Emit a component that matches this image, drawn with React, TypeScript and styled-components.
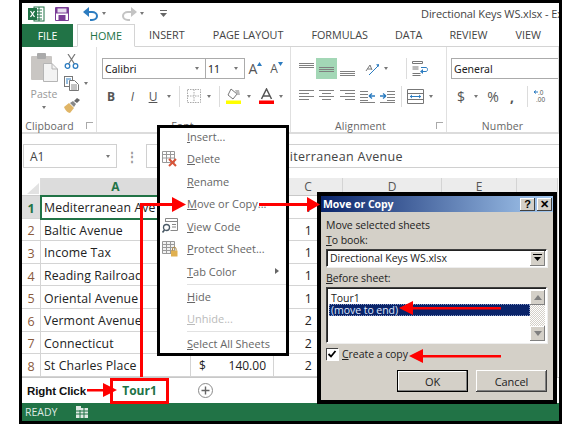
import React from "react";
import styled, { createGlobalStyle } from "styled-components";

const Global = createGlobalStyle`
  html, body { margin: 0; padding: 0; background: #fff; }
  * { box-sizing: border-box; }
`;
const UI = `"Open Sans", "Noto Sans", sans-serif`;
const GREEN = "#217346";

const Page = styled.div`
  position: relative; width: 580px; height: 426px; overflow: hidden;
  padding-left: 19px; font-family: ${UI}; background: #fff;
`;
const Frame = styled.div`
  width: 543px; height: 424px; border: 3px solid #000; background: #fff;
  display: flex; flex-direction: column; overflow: hidden;
`;
const TitleBar = styled.div`
  height: 21px; display: flex; align-items: center; padding-left: 5px; flex: none;
`;
const Qat = styled.div<{ $w: number }>`
  width: ${(p) => p.$w}px; height: 21px; flex: none;
  display: flex; align-items: center; justify-content: center;
`;
const DocTitle = styled.div`
  margin-left: auto; font-size: 11px; color: #444; white-space: nowrap;
  width: 138px; letter-spacing: -0.1px; padding-top: 0;
`;
const Tabs = styled.div`
  height: 23px; display: flex; flex: none; position: relative;
  border-bottom: 1px solid #d4d4d4; font-size: 10.8px; color: #444;
`;
const FileTab = styled.div`
  width: 51px; height: 23px; background: ${GREEN}; color: #fff; font-weight: 400;
  display: flex; align-items: center; justify-content: center; font-size: 10.5px;
`;
const HomeTab = styled.div`
  width: 58px; height: 23px; margin-left: 4px; border: 1px solid #d4d4d4; border-bottom: 1px solid #fff;
  color: ${GREEN}; background: #fff; display: flex; align-items: center; justify-content: center;
`;
const Tab = styled.div<{ $ml: number }>`
  margin-left: ${(p) => p.$ml}px; line-height: 22px; white-space: nowrap;
`;
const Ribbon = styled.div`
  height: 87px; display: flex; flex: none; border-bottom: 2px solid #dcdcdc;
`;
const Group = styled.div<{ $w?: number }>`
  ${(p) => (p.$w ? `width: ${p.$w}px; flex: none;` : "flex: 1; min-width: 0;")}
  display: flex; flex-direction: column; position: relative;
  border-right: 1px solid #e0e0e0;
`;
const GroupBody = styled.div<{ $pl?: number }>`
  flex: 1; padding: 11px 0 0 ${(p) => p.$pl ?? 0}px; display: flex; flex-direction: column; gap: 7px; min-height: 0; overflow: hidden;
`;
const GroupLabel = styled.div<{ $pr?: number }>`
  height: 12px; font-size: 10.5px; color: #666; text-align: center; line-height: 12px; flex: none;
  position: relative; letter-spacing: 0.1px; padding-right: ${(p) => p.$pr ?? 0}px;
`;
const Launcher = styled.span`
  position: absolute; right: 3px; top: 2px; width: 7px; height: 7px;
  border-left: 1px solid #aaa; border-top: 1px solid #aaa;
`;
const ToolRow = styled.div<{ $ml?: number; $h?: number }>`
  display: flex; align-items: center; height: ${(p) => p.$h ?? 20}px; margin-left: ${(p) => p.$ml ?? 0}px; flex: none;
`;
const Tool = styled.div<{ $w: number; $on?: boolean; $c?: string; $fs?: number; $b?: boolean; $i?: boolean; $u?: boolean }>`
  width: ${(p) => p.$w}px; height: 100%; flex: none; display: flex; align-items: center; justify-content: center;
  background: ${(p) => (p.$on ? "#a3d7b6" : "transparent")};
  color: ${(p) => p.$c ?? "#555"}; font-size: ${(p) => p.$fs ?? 12}px;
  font-weight: ${(p) => (p.$b ? 700 : 400)}; font-style: ${(p) => (p.$i ? "italic" : "normal")};
  text-decoration: ${(p) => (p.$u ? "underline" : "none")};
`;
const Caret = styled.span`
  width: 0; height: 0; border-left: 2.5px solid transparent; border-right: 2.5px solid transparent;
  border-top: 3px solid #777;
`;
const VSep = styled.div<{ $ml: number; $mr: number }>`
  width: 1px; height: 21px; background: #dcdcdc; margin: 0 ${(p) => p.$mr}px 0 ${(p) => p.$ml}px; flex: none;
`;
const Select = styled.div<{ $w: number; $ml?: number }>`
  width: ${(p) => p.$w}px; margin-left: ${(p) => p.$ml ?? 0}px; height: 21px; flex: none; border: 1px solid #ababab; background: #fff;
  display: flex; align-items: center; justify-content: space-between; padding: 0 6px 0 2px;
  font-size: 10.5px; color: #222; font-family: "Noto Sans", sans-serif;
`;
const ClipBody = styled.div`
  flex: 1; display: flex; min-height: 0;
`;
const PasteCol = styled.div`
  width: 40px; display: flex; flex-direction: column; align-items: center; padding: 6px 0 0 0; margin-left: 2px;
  font-size: 10.5px; color: #999; line-height: 14px;
`;
const PasteLabel = styled.div`
  margin-top: 5px; margin-bottom: 5px;
`;
const ClipTools = styled.div`
  display: flex; flex-direction: column; padding-top: 7px; gap: 7px; align-items: flex-start;
`;
const ClipTool = styled.div`
  display: flex; align-items: center; gap: 5px; height: 15px;
`;

const FormulaWrap = styled.div`
  height: 44px; flex: none; padding: 10px 0 10px 1px; display: flex; align-items: stretch;
`;
const NameBox = styled.div`
  width: 94px; border: 1px solid #d0d0d0; display: flex; align-items: center; justify-content: space-between;
  padding: 0 6px; font-size: 12px; color: #444;
`;
const Dots = styled.div`
  width: 29px; display: flex; align-items: center; justify-content: center; color: #999; font-size: 12px; font-weight: 700;
`;
const FormulaInput = styled.div`
  flex: 1; border: 1px solid #d0d0d0; border-right: none; padding-left: 116px;
  font-size: 12.5px; color: #444; display: flex; align-items: center; white-space: nowrap; letter-spacing: 0.3px;
`;
const Sheet = styled.div`
  height: 199px; flex: none; display: grid;
  grid-template-columns: 19px 150px 83px 69px 99px 75px 41px;
  grid-template-rows: 18px repeat(8, 22.6px); overflow: hidden; position: relative;
`;
const Corner = styled.div`
  background: #fff; border-right: 1px solid #ddd; border-bottom: 1px solid #ccc; position: relative; overflow: hidden;
  &::after { content: ""; position: absolute; right: 1px; bottom: 1px; border-left: 12px solid transparent; border-bottom: 11px solid #e2e2e2; }
`;
const ColHead = styled.div<{ $on?: boolean }>`
  background: ${(p) => (p.$on ? "#dcdcdc" : "#ececec")}; border-right: 1px solid #d4d4d4; border-bottom: 1px solid #c8c8c8;
  color: ${(p) => (p.$on ? GREEN : "#555")}; font-weight: ${(p) => (p.$on ? 700 : 400)};
  font-size: 12px; display: flex; align-items: center; justify-content: center;
`;
const RowHead = styled.div<{ $on?: boolean }>`
  background: ${(p) => (p.$on ? "#dcdcdc" : "#fff")}; border-right: 1px solid #d4d4d4; border-bottom: 1px solid #d4d4d4;
  color: ${(p) => (p.$on ? GREEN : "#8a5a3c")}; font-weight: ${(p) => (p.$on ? 700 : 400)};
  font-size: 12.5px; display: flex; align-items: center; justify-content: center; padding-top: 3px;
`;
const Cell = styled.div<{ $sel?: boolean }>`
  border-right: 1px solid #d4d4d4; border-bottom: 1px solid #d4d4d4;
  ${(p) => (p.$sel ? `outline: 2px solid ${GREEN}; outline-offset: -1px; z-index: 1;` : "")}
  font-size: 12.3px; color: #222; display: flex; align-items: center; padding: 2px 3px 0; white-space: nowrap; overflow: hidden;
  letter-spacing: 0.12px;
`;
const Money = styled(Cell)`
  justify-content: space-between; padding: 2px 7px 0 8px; font-size: 12px; letter-spacing: 0;
`;
const OneCell = styled(Cell)`
  justify-content: flex-end; padding-right: 30px;
`;
const SheetBar = styled.div`
  height: 26px; flex: none; border-top: 1px solid #c8c8c8; display: flex; align-items: center; padding-left: 5px; position: relative;
`;
const RightClick = styled.div`
  font-family: "Liberation Sans", Arial, sans-serif; font-weight: 700; font-size: 11.5px; color: #111; width: 83px; letter-spacing: -0.1px;
`;
const TourTab = styled.div`
  width: 59px; height: 26px; border: 3px solid #f00; color: ${GREEN}; font-weight: 700; font-size: 12px;
  display: flex; align-items: center; justify-content: center;
`;
const AddSheet = styled.div`
  margin-left: 29px; width: 15px; height: 15px; display: flex;
`;
const Status = styled.div`
  height: 18px; flex: none; background: ${GREEN}; color: #dfe9e3; font-size: 10.5px;
  display: flex; align-items: center; padding-left: 3px; gap: 19px;
`;

const Menu = styled.div`
  position: absolute; left: 157px; top: 125px; width: 132px; height: 231px;
  border: 3px solid #000; background: #fff; z-index: 5;
  & > :first-child { margin-top: -3px; }
`;
const MenuItem = styled.div<{ $off?: boolean }>`
  height: 22.5px; display: flex; align-items: center; position: relative;
  padding-left: 27px; font-size: 11px; color: ${(p) => (p.$off ? "#bbb" : "#666")}; white-space: nowrap;
  & u { text-decoration-color: currentColor; }
`;
const MenuIcon = styled.span`
  position: absolute; left: 2px; top: 3px; width: 16px; height: 16px; display: flex;
`;
const MenuSep = styled.div`
  height: 1px; margin: 1px 0 0.5px 27px; background: #e2e2e2;
`;
const SubCaret = styled.span`
  position: absolute; right: 7px; top: 8px; border-left: 4px solid #666; border-top: 3px solid transparent; border-bottom: 3px solid transparent;
`;

const Dialog = styled.div`
  position: absolute; left: 317px; top: 192px; width: 240px; height: 212px; border: 4px solid #000;
  background: #d4d0c8; z-index: 6; font-size: 10.5px; color: #222; display: flex; flex-direction: column; letter-spacing: -0.05px;
`;
const DlgTitle = styled.div`
  height: 16px; flex: none; background: linear-gradient(90deg, #0a246a, #a6caf0); color: #fff; font-weight: 700; font-size: 10.5px;
  display: flex; align-items: center; padding: 0 1px 0 2px; gap: 2px;
`;
const DlgTitleText = styled.div`
  flex: 1;
`;
const DlgBtn = styled.div`
  width: 15px; height: 13px; background: #d4d0c8; color: #000; font-size: 11px; font-weight: 700; line-height: 13px; text-align: center;
  box-shadow: inset -1px -1px 0 #404040, inset 1px 1px 0 #fff;
  font-family: "Liberation Sans", sans-serif;
`;
const DlgBody = styled.div`
  flex: 1; padding: 6px 6px 0 5px; display: flex; flex-direction: column; min-height: 0;
`;
const DlgLabel = styled.div<{ $mt?: number }>`
  height: 15px; line-height: 15px; margin-top: ${(p) => p.$mt ?? 0}px; flex: none;
`;
const Sunken = `
  background: #fff; border: 1px solid; border-color: #404040 #fff #fff #404040;
  box-shadow: inset 1px 1px 0 #222, 1px 1px 0 #eee;
`;
const Combo = styled.div`
  ${Sunken}
  height: 18px; margin-top: 1px; flex: none; display: flex; align-items: center; padding-left: 3px; justify-content: space-between; padding-right: 1px;
`;
const ScrollBtn = styled.div<{ $h?: number }>`
  width: 15px; height: ${(p) => p.$h ?? 15}px; flex: none; background: #d4d0c8; display: flex; align-items: center; justify-content: center;
  box-shadow: inset -1px -1px 0 #808080, inset 1px 1px 0 #fff;
`;
const ListBox = styled.div`
  ${Sunken}
  height: 56px; margin-top: 1px; flex: none; display: flex; padding: 2px 1px 1px 2px;
`;
const ListItems = styled.div`
  flex: 1; min-width: 0; padding-top: 2px;
`;
const ListItem = styled.div<{ $sel?: boolean }>`
  height: 12px; line-height: 12px; padding-left: 2px;
  ${(p) => (p.$sel ? "background: #0a246a; color: #dfe8ff; outline: 1px dotted #8899c4; outline-offset: -1px;" : "")}
`;
const ScrollBar = styled.div`
  width: 15px; flex: none; display: flex; flex-direction: column; justify-content: space-between;
  background: repeating-conic-gradient(#d4d0c8 0 25%, #fff 0 50%) 0 0 / 2px 2px;
`;
const CheckRow = styled.div`
  display: flex; align-items: center; height: 14px; margin-top: 4px; gap: 4px; flex: none;
`;
const CheckBox = styled.div`
  width: 12px; height: 12px; background: #fff; flex: none; display: flex;
  box-shadow: inset 1px 1px 0 #404040, 1px 1px 0 #fff;
`;
const Buttons = styled.div`
  display: flex; justify-content: flex-end; gap: 8px; margin-top: 9px; flex: none;
`;
const Btn = styled.div<{ $def?: boolean }>`
  width: 71px; height: 22px; background: #d4d0c8; display: flex; align-items: center; justify-content: center; font-size: 11px;
  box-shadow: ${(p) =>
    p.$def ? "inset 0 0 0 1px #000, inset -2px -2px 0 #808080, inset 2px 2px 0 #fff" : "inset -1px -1px 0 #404040, inset 1px 1px 0 #fff, inset -2px -2px 0 #808080"};
`;
const Arrows = styled.svg`
  position: absolute; left: 0; top: 0; width: 580px; height: 426px; z-index: 10; pointer-events: none;
`;

const ExcelIcon = () => (
  <svg width="17" height="16" viewBox="0 0 17 16">
    <rect x="6" y="1" width="10" height="14" fill="#fff" stroke={GREEN} />
    <path d="M8 4h6M8 7h6M8 10h6M8 13h6M11 1v14" stroke={GREEN} />
    <rect x="0" y="2" width="9" height="12" fill={GREEN} />
    <path d="M2.5 5l4 6M6.5 5l-4 6" stroke="#fff" strokeWidth="1.3" />
  </svg>
);
const SaveIcon = () => (
  <svg width="14" height="14" viewBox="0 0 14 14">
    <path d="M.5.5h13v13H.5z" fill="#fff" stroke="#7a3c96" />
    <rect x="1" y="1" width="12" height="5.5" fill="#7a3c96" />
    <rect x="2.5" y="1.5" width="9" height="4" fill="#e9dff0" />
    <rect x="3.5" y="8" width="7" height="5.5" fill="#7a3c96" />
  </svg>
);
const UndoIcon = ({ c }: { c: string }) => (
  <svg width="15" height="14" viewBox="0 0 15 14">
    <path d="M3 5h6c3 0 5 2 5 4s-2 4-5 4H7" fill="none" stroke={c} strokeWidth="2" />
    <path d="M6 0v10L0 5z" fill={c} />
  </svg>
);
const RedoIcon = () => (
  <svg width="15" height="14" viewBox="0 0 15 14">
    <path d="M12 5H6C3 5 1 7 1 9s2 4 5 4h2" fill="none" stroke="#c4c4c4" strokeWidth="2" />
    <path d="M9 0v10l6-5z" fill="#c4c4c4" />
  </svg>
);
const CustomizeIcon = () => (
  <svg width="7" height="8" viewBox="0 0 7 8"><path d="M0 .5h7" stroke="#666" /><path d="M0 3h7L3.5 7z" fill="#666" /></svg>
);
const PasteIcon = () => (
  <svg width="27" height="29" viewBox="0 0 27 29">
    <rect x="0" y="3" width="21" height="24" rx="1" fill="#c9c6c3" />
    <rect x="6" y="0" width="9" height="6" rx="1" fill="#aaa" />
    <path d="M12.5 10.5H21l5.5 5.5v12.5h-14z" fill="#f3f3f3" stroke="#b5b5b5" />
    <path d="M21 10.5V16h5.5" fill="none" stroke="#b5b5b5" />
  </svg>
);
const ScissorsIcon = () => (
  <svg width="15" height="15" viewBox="0 0 15 15">
    <path d="M4 0l6.5 10M11 0L4.5 10" stroke="#777" strokeWidth="1.2" fill="none" />
    <circle cx="3.5" cy="12" r="2.3" fill="none" stroke="#2c7cc0" strokeWidth="1.3" />
    <circle cx="11.5" cy="12" r="2.3" fill="none" stroke="#2c7cc0" strokeWidth="1.3" />
  </svg>
);
const CopyIcon = () => (
  <svg width="15" height="15" viewBox="0 0 15 15">
    <rect x=".5" y=".5" width="8" height="10" fill="#fff" stroke="#777" />
    <path d="M2 3h5M2 5h2M2 7h2" stroke="#2c7cc0" />
    <path d="M5.5 4.5h5l4 4v6h-9z" fill="#fff" stroke="#777" />
    <path d="M7 9h6M7 11h6M7 13h6" stroke="#888" />
  </svg>
);
const PainterIcon = () => (
  <svg width="16" height="15" viewBox="0 0 16 15">
    <path d="M0 9l5-4 5 5-4 5c-2 0-5-3-6-6z" fill="#e0b566" />
    <path d="M6 5l3-2 3 3-2 3z" fill="#888" />
    <path d="M10 3l3-3 3 2-3 3z" fill="#666" />
  </svg>
);
const GrowA = ({ fs, up }: { fs: number; up: boolean }) => (
  <Tool $w={21} $fs={fs}>
    A
    <svg width="5" height="4" viewBox="0 0 5 4" style={{ marginTop: -10 }}>
      <path d={up ? "M2.5 0L5 4H0z" : "M0 0h5L2.5 4z"} fill="#2c7cc0" />
    </svg>
  </Tool>
);
const BorderIcon = () => (
  <svg width="14" height="14" viewBox="0 0 14 14"><path d="M.5.5h13v13H.5zM7 .5v13M.5 7h13" fill="none" stroke="#aaa" strokeDasharray="1.5 1" /></svg>
);
const FillIcon = () => (
  <svg width="15" height="16" viewBox="0 0 15 16">
    <path d="M5 1l6 5-4 5-5-4z" fill="#fff" stroke="#777" />
    <path d="M9 2h4l1 5h-3z" fill="#bbb" />
    <rect x="0" y="12.5" width="15" height="3.5" fill="#ff0" />
  </svg>
);
const ColorA = () => (
  <svg width="15" height="16" viewBox="0 0 15 16">
    <path d="M2.5 11L7.5 1l5 10M4.5 8h6" fill="none" stroke="#555" strokeWidth="1.5" />
    <rect x="0" y="12.5" width="15" height="3.5" fill="#f00" />
  </svg>
);
const Lines = ({ rows, w = 15 }: { rows: [number, number, number][]; w?: number }) => (
  <svg width={w} height="14" viewBox={`0 0 ${w} 14`}>
    {rows.map(([x1, x2, y], i) => (
      <path key={i} d={`M${x1} ${y + 0.5}H${x2}`} stroke="#808080" />
    ))}
  </svg>
);
const full = (ys: number[]): [number, number, number][] => ys.map((y) => [0, 15, y]);
const OrientIcon = () => (
  <svg width="16" height="14" viewBox="0 0 16 14">
    <path d="M2 9l4-6 2 5M3.5 7l4 0" fill="none" stroke="#777" />
    <path d="M5 13L15 3" stroke="#2c7cc0" />
    <path d="M15 2l-3 .5 2.5 2.5z" fill="#2c7cc0" />
  </svg>
);
const WrapIcon = () => (
  <svg width="17" height="15" viewBox="0 0 17 15">
    <path d="M.5.5h10v2H.5zM.5 6h6M.5 8h6M.5 12.5h8M.5 14.5h8" fill="none" stroke="#777" />
    <path d="M9 6.5h5c2 0 2 4 0 4H9" fill="none" stroke="#2c7cc0" />
    <path d="M11 8l-3 2.5 3 2.5z" fill="#2c7cc0" />
  </svg>
);
const IndentIcon = ({ flip }: { flip?: boolean }) => (
  <svg width="15" height="13" viewBox="0 0 15 13" style={flip ? { transform: "scaleX(-1)" } : undefined}>
    <path d="M7 1.5h8M7 4.5h8M7 7.5h8M7 10.5h8M0 12.5h15" stroke="#808080" />
    <path d="M0 6h6M6 6L3 3.5M6 6L3 8.5" stroke="#2c7cc0" fill="none" strokeWidth="1.3" />
  </svg>
);
const MergeIcon = () => (
  <svg width="17" height="15" viewBox="0 0 17 15">
    <path d="M.5.5h16v14H.5zM.5 4.5h16M.5 10.5h16" fill="none" stroke="#777" />
    <path d="M3 7.5h11" stroke="#2c7cc0" />
    <path d="M3 7.5l2-2v4zM14 7.5l-2-2v4z" fill="#2c7cc0" />
  </svg>
);
const DecIcon = () => (
  <svg width="14" height="14" viewBox="0 0 14 14">
    <text x="4" y="6" fontSize="6.5" fill="#555" fontFamily="Liberation Sans, sans-serif">.0</text>
    <text x="2" y="13" fontSize="6.5" fill="#555" fontFamily="Liberation Sans, sans-serif">.00</text>
    <path d="M0 3h4M0 3l2-1.5M0 3l2 1.5" stroke="#2c7cc0" fill="none" />
  </svg>
);
const DeleteIcon = () => (
  <svg width="16" height="16" viewBox="0 0 16 16">
    <path d="M.5.5h12v11H.5zM.5 3.5h12M.5 7h12M4.5.5v11M8.5.5v11" fill="#fff" stroke="#999" />
    <path d="M7 8l7 7M14 8l-7 7" stroke="#d8553a" strokeWidth="2" />
  </svg>
);
const CodeIcon = () => (
  <svg width="16" height="16" viewBox="0 0 16 16">
    <path d="M3.5.5h12v12h-7M3.5 4V.5M3.5 3.5h12" fill="none" stroke="#888" />
    <path d="M10 6.5h4M10 9h4" stroke="#888" />
    <circle cx="4.5" cy="9.5" r="3" fill="none" stroke="#4a5a66" strokeWidth="1.3" />
    <path d="M2.5 12L.5 14.5" stroke="#4a5a66" strokeWidth="1.6" />
  </svg>
);
const ProtectIcon = () => (
  <svg width="16" height="16" viewBox="0 0 16 16">
    <path d="M.5.5h12v12H.5zM.5 3.5h12M.5 6.5h12M.5 9.5h12M4.5.5v12M8.5.5v12" fill="#f2f2f2" stroke="#999" />
    <rect x="9" y="9.5" width="6.5" height="6" fill="#e0b050" />
    <path d="M10.5 9.5V8a1.8 1.8 0 013.6 0v1.5" fill="none" stroke="#b08a40" />
  </svg>
);
const DownTri = ({ c = "#000" }: { c?: string }) => (
  <svg width="9" height="8" viewBox="0 0 9 8"><path d="M0 0h9v1H0z" fill={c} /><path d="M1 3h7L4.5 7z" fill={c} /></svg>
);
const UpTri = () => <svg width="8" height="5" viewBox="0 0 8 5"><path d="M4 0l4 5H0z" fill="#808080" /></svg>;
const DownTriGray = () => <svg width="8" height="5" viewBox="0 0 8 5"><path d="M0 0h8L4 5z" fill="#808080" /></svg>;

const rows: [string, string, string][] = [
  ["Mediterranean Ave", "", "1"],
  ["Baltic Avenue", "", "1"],
  ["Income Tax", "", "1"],
  ["Reading Railroad", "", "1"],
  ["Oriental Avenue", "", "1"],
  ["Vermont Avenue", "", "2"],
  ["Connecticut", "", "2"],
  ["St Charles Place", "140.00", "2"],
];

export default function App() {
  return (
    <Page>
      <Global />
      <Frame>
        <TitleBar>
          <Qat $w={18}><ExcelIcon /></Qat>
          <Qat $w={10} />
          <Qat $w={14}><SaveIcon /></Qat>
          <Qat $w={13} />
          <Qat $w={16}><UndoIcon c="#2c7cc0" /></Qat>
          <Qat $w={12}><Caret /></Qat>
          <Qat $w={11} />
          <Qat $w={16}><RedoIcon /></Qat>
          <Qat $w={10}><Caret /></Qat>
          <Qat $w={12} />
          <Qat $w={8}><CustomizeIcon /></Qat>
          <DocTitle>Directional Keys WS.xlsx - Ex</DocTitle>
        </TitleBar>
        <Tabs>
          <FileTab>FILE</FileTab>
          <HomeTab>HOME</HomeTab>
          <Tab $ml={14}>INSERT</Tab>
          <Tab $ml={28}>PAGE LAYOUT</Tab>
          <Tab $ml={28}>FORMULAS</Tab>
          <Tab $ml={27}>DATA</Tab>
          <Tab $ml={27}>REVIEW</Tab>
          <Tab $ml={28}>VIEW</Tab>
        </Tabs>
        <Ribbon>
          <Group $w={75}>
            <ClipBody>
              <PasteCol>
                <PasteIcon />
                <PasteLabel>Paste</PasteLabel>
                <Caret />
              </PasteCol>
              <ClipTools>
                <ClipTool><ScissorsIcon /></ClipTool>
                <ClipTool><CopyIcon /><Caret /></ClipTool>
                <ClipTool><PainterIcon /></ClipTool>
              </ClipTools>
            </ClipBody>
            <GroupLabel $pr={19}>Clipboard<Launcher /></GroupLabel>
          </Group>
          <Group $w={194}>
            <GroupBody $pl={3}>
              <ToolRow $h={21} $ml={2}>
                <Select $w={104}>Calibri<Caret /></Select>
                <Select $w={40} $ml={-1}>11<Caret /></Select>
                <GrowA fs={14} up />
                <GrowA fs={12} up={false} />
              </ToolRow>
              <ToolRow>
                <Tool $w={22} $b>B</Tool>
                <Tool $w={21} $i>I</Tool>
                <Tool $w={20} $u>U</Tool>
                <Tool $w={12}><Caret /></Tool>
                <VSep $ml={4} $mr={4} />
                <Tool $w={20}><BorderIcon /></Tool>
                <Tool $w={10}><Caret /></Tool>
                <VSep $ml={5} $mr={4} />
                <Tool $w={19}><FillIcon /></Tool>
                <Tool $w={11}><Caret /></Tool>
                <Tool $w={2} />
                <Tool $w={20}><ColorA /></Tool>
                <Tool $w={10}><Caret /></Tool>
              </ToolRow>
            </GroupBody>
            <GroupLabel $pr={22}>Font</GroupLabel>
          </Group>
          <Group $w={156}>
            <GroupBody $pl={5}>
              <ToolRow $h={21}>
                <Tool $w={20}><Lines rows={full([1, 3, 5])} /></Tool>
                <Tool $w={21} $on><Lines rows={full([5, 7, 9])} /></Tool>
                <Tool $w={20}><Lines rows={full([9, 11, 13])} /></Tool>
                <Tool $w={5} />
                <Tool $w={20}><OrientIcon /></Tool>
                <Tool $w={8}><Caret /></Tool>
                <VSep $ml={16} $mr={5} />
                <Tool $w={17}><WrapIcon /></Tool>
              </ToolRow>
              <ToolRow>
                <Tool $w={20}><Lines rows={[[0, 15, 1], [0, 10, 4], [0, 15, 7], [0, 10, 10]]} /></Tool>
                <Tool $w={21}><Lines rows={[[0, 15, 1], [3, 12, 4], [0, 15, 7], [3, 12, 10]]} /></Tool>
                <Tool $w={20}><Lines rows={[[0, 15, 1], [5, 15, 4], [0, 15, 7], [5, 15, 10]]} /></Tool>
                <Tool $w={20}><IndentIcon flip /></Tool>
                <Tool $w={20}><IndentIcon /></Tool>
                <VSep $ml={4} $mr={5} />
                <Tool $w={17}><MergeIcon /></Tool>
                <Tool $w={13}><Caret /></Tool>
              </ToolRow>
            </GroupBody>
            <GroupLabel $pr={16}>Alignment<Launcher /></GroupLabel>
          </Group>
          <Group>
            <GroupBody $pl={4}>
              <ToolRow $h={21}>
                <Select $w={120}>General</Select>
              </ToolRow>
              <ToolRow>
                <Tool $w={20} $fs={14}>$</Tool>
                <Tool $w={10}><Caret /></Tool>
                <Tool $w={24} $fs={14}>%</Tool>
                <Tool $w={14} $fs={14} $b>,</Tool>
                <VSep $ml={8} $mr={5} />
                <Tool $w={15}><DecIcon /></Tool>
              </ToolRow>
            </GroupBody>
            <GroupLabel>Number</GroupLabel>
          </Group>
        </Ribbon>
        <FormulaWrap>
          <NameBox>A1<Caret /></NameBox>
          <Dots>⋮</Dots>
          <FormulaInput>Mediterranean Avenue</FormulaInput>
        </FormulaWrap>
        <Sheet>
          <Corner />
          {["A", "B", "C", "D", "E", ""].map((c) => (
            <ColHead key={c} $on={c === "A"}>{c}</ColHead>
          ))}
          {rows.map(([name, val, n], i) => (
            <React.Fragment key={name}>
              <RowHead $on={i === 0}>{i + 1}</RowHead>
              <Cell $sel={i === 0}>{name}</Cell>
              {val ? <Money><span>$</span><span>{val}</span></Money> : <Cell />}
              <OneCell>{n}</OneCell>
              <Cell />
              <Cell />
              <Cell />
            </React.Fragment>
          ))}
        </Sheet>
        <SheetBar>
          <RightClick>Right Click</RightClick>
          <TourTab>Tour1</TourTab>
          <AddSheet>
            <svg width="15" height="15" viewBox="0 0 15 15">
              <circle cx="7.5" cy="7.5" r="7" fill="#fff" stroke="#8a8a8a" />
              <path d="M7.5 3.5v8M3.5 7.5h8" stroke="#666" strokeWidth="1.4" />
            </svg>
          </AddSheet>
        </SheetBar>
        <Status>
          READY
          <svg width="12" height="12" viewBox="0 0 12 12">
            <rect x="0" y="2" width="12" height="10" fill="#dfe9e3" />
            <path d="M0 5h12M0 8h12M4 2v10M8 2v10" stroke={GREEN} />
            <rect x="0" y="0" width="5" height="4" fill="#dfe9e3" />
          </svg>
        </Status>
      </Frame>

      <Menu>
        <MenuItem><u>I</u>nsert...</MenuItem>
        <MenuItem><MenuIcon><DeleteIcon /></MenuIcon><u>D</u>elete</MenuItem>
        <MenuItem><u>R</u>ename</MenuItem>
        <MenuItem><u>M</u>ove or Copy...</MenuItem>
        <MenuItem><MenuIcon><CodeIcon /></MenuIcon><u>V</u>iew Code</MenuItem>
        <MenuItem><MenuIcon><ProtectIcon /></MenuIcon><u>P</u>rotect Sheet...</MenuItem>
        <MenuItem><u>T</u>ab Color<SubCaret /></MenuItem>
        <MenuSep />
        <MenuItem><u>H</u>ide</MenuItem>
        <MenuItem $off><u>U</u>nhide...</MenuItem>
        <MenuSep />
        <MenuItem><u>S</u>elect All Sheets</MenuItem>
      </Menu>

      <Dialog>
        <DlgTitle>
          <DlgTitleText>Move or Copy</DlgTitleText>
          <DlgBtn>?</DlgBtn>
          <DlgBtn>✕</DlgBtn>
        </DlgTitle>
        <DlgBody>
          <DlgLabel>Move selected sheets</DlgLabel>
          <DlgLabel><u>T</u>o book:</DlgLabel>
          <Combo>Directional Keys WS.xlsx<ScrollBtn><DownTri /></ScrollBtn></Combo>
          <DlgLabel $mt={4}><u>B</u>efore sheet:</DlgLabel>
          <ListBox>
            <ListItems>
              <ListItem>Tour1</ListItem>
              <ListItem $sel>(move to end)</ListItem>
            </ListItems>
            <ScrollBar>
              <ScrollBtn><UpTri /></ScrollBtn>
              <ScrollBtn><DownTriGray /></ScrollBtn>
            </ScrollBar>
          </ListBox>
          <CheckRow>
            <CheckBox>
              <svg width="12" height="12" viewBox="0 0 12 12"><path d="M2.5 6l2.5 2.5 4.5-5.5" fill="none" stroke="#000" strokeWidth="1.8" /></svg>
            </CheckBox>
            <span><u>C</u>reate a copy</span>
          </CheckRow>
          <Buttons>
            <Btn $def>OK</Btn>
            <Btn>Cancel</Btn>
          </Buttons>
        </DlgBody>
      </Dialog>

      <Arrows viewBox="0 0 580 426">
        <g fill="#f00" stroke="none">
          <rect x="140" y="203" width="3" height="174" />
          <rect x="140" y="203" width="34" height="3" />
          <path d="M172 197l14 7.5-14 7.5z" />
          <rect x="259" y="203" width="50" height="3" />
          <path d="M307 197l13 7.5-13 7.5z" />
          <rect x="87" y="389" width="18" height="2.5" />
          <path d="M103 383l14 7-14 7z" />
          <rect x="410" y="307" width="91" height="2.5" />
          <path d="M413 301l-14 7 14 7z" />
          <rect x="420" y="355" width="81" height="2.5" />
          <path d="M423 349l-14 7 14 7z" />
        </g>
      </Arrows>
    </Page>
  );
}
